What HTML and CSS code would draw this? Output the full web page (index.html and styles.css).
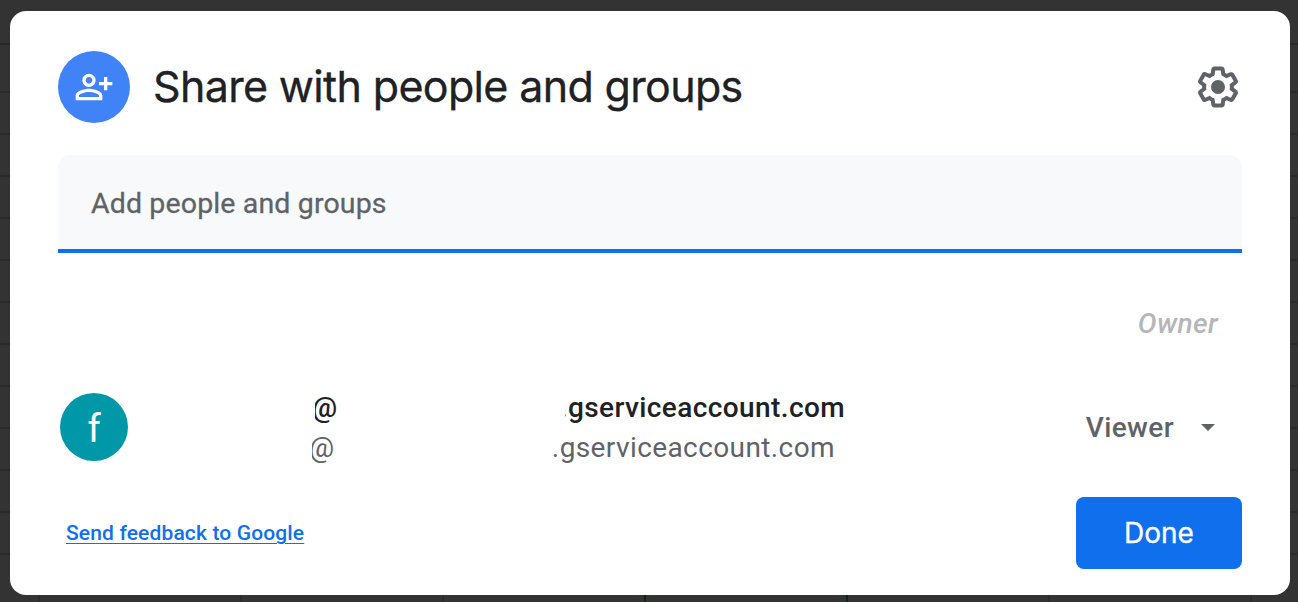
FILE: index.html
```html
<!DOCTYPE html>
<html lang="en">
<head>
  <meta charset="UTF-8" />
  <meta name="viewport" content="width=device-width, initial-scale=1.0"/>
  <title>Share with people and groups</title>
  <link rel="stylesheet" href="styles.css">
</head>
<body>

<div class="dialog">
  <header class="dialog-header">
    <div class="header-icon">
      <svg width="40" height="40" viewBox="0 0 24 24">
        <path d="M9 12c2.21 0 4-1.79 4-4s-1.79-4-4-4-4 1.79-4 4 1.79 4 4 4zm0-6c1.1 0 2 .9 2 2s-.9 2-2 2-2-.9-2-2 .9-2 2-2zM9 13c-2.67 0-8 1.34-8 4v3h16v-3c0-2.66-5.33-4-8-4zm6 5H3v-.99C3.2 16.29 6.3 15 9 15s5.8 1.29 6 2v1zM20 9V6h-2v3h-3v2h3v3h2v-3h3V9z"/>
      </svg>
    </div>
    <h1>Share with people and groups</h1>
    <button class="settings-btn" aria-label="Settings">
      <svg width="48" height="48" viewBox="0 0 24 24">
        <path d="M13.85 22.25h-3.7c-.74 0-1.36-.54-1.45-1.27l-.27-1.89c-.27-.14-.53-.29-.79-.46l-1.8.72c-.7.26-1.47-.03-1.81-.65L2.2 15.53c-.35-.66-.2-1.44.36-1.88l1.53-1.19c-.01-.15-.02-.3-.02-.46 0-.15.01-.31.02-.46l-1.52-1.19c-.59-.45-.74-1.26-.37-1.88l1.85-3.19c.34-.62 1.11-.9 1.79-.63l1.81.73c.26-.17.52-.32.78-.46l.27-1.91c.09-.7.71-1.25 1.44-1.25h3.7c.74 0 1.36.54 1.45 1.27l.27 1.89c.27.14.53.29.79.46l1.8-.72c.71-.26 1.48.03 1.82.65l1.84 3.18c.36.66.2 1.44-.36 1.88l-1.52 1.19c.01.15.02.3.02.46s-.01.31-.02.46l1.52 1.19c.56.45.72 1.23.37 1.86l-1.86 3.22c-.34.62-1.11.9-1.8.63l-1.8-.72c-.26.17-.52.32-.78.46l-.27 1.91c-.1.68-.72 1.22-1.46 1.22zm-3.23-2h2.76l.37-2.55.53-.22c.44-.18.88-.44 1.34-.78l.45-.34 2.38.96 1.38-2.4-2.03-1.58.07-.56c.03-.26.06-.51.06-.78s-.03-.53-.06-.78l-.07-.56 2.03-1.58-1.39-2.4-2.39.96-.45-.35c-.42-.32-.87-.58-1.33-.77l-.52-.22-.37-2.55h-2.76l-.37 2.55-.53.21c-.44.19-.88.44-1.34.79l-.45.33-2.38-.95-1.39 2.39 2.03 1.58-.07.56a7 7 0 0 0-.06.79c0 .26.02.53.06.78l.07.56-2.03 1.58 1.38 2.4 2.39-.96.45.35c.43.33.86.58 1.33.77l.53.22.38 2.55z"/>
        <circle cx="12" cy="12" r="3.5"/>
      </svg>
    </button>
  </header>

  <div class="people-input">Add people and groups</div>

  <div class="owner-row">Owner</div>

  <div class="person-row">
    <div class="avatar">f</div>
    <div class="person-info">
      <div class="person-name"><span class="at">@</span><span class="domain"><span class="dot">.</span>gserviceaccount.com</span></div>
      <div class="person-email"><span class="at">@</span><span class="domain">.gserviceaccount.com</span></div>
    </div>
    <div class="role">
      <span>Viewer</span>
      <span class="arrow"></span>
    </div>
  </div>

  <footer class="dialog-footer">
    <a href="#">Send feedback to Google</a>
    <button class="done-btn">Done</button>
  </footer>
</div>

</body>
</html>
```
FILE: styles.css
```css
* {
  box-sizing: border-box;
}
/* dimmed spreadsheet grid behind the dialog */
body {
  margin: 0;
  height: 602px;
  overflow: hidden;
  padding: 11px 8px 7px 10px;
  font-family: Roboto, sans-serif;
  background-color: #333;
  background-image:
    linear-gradient(#282828, #282828),
    linear-gradient(#0f2419, #0f2419),
    linear-gradient(#0f2419, #0f2419),
    repeating-linear-gradient(to right, transparent 0 38px, #2c2c2c 38px 40px, transparent 40px 202px),
    repeating-linear-gradient(to bottom, transparent 0 40px, #2b2b2b 40px 42px);
  background-size: 100% 2px, 2px 7px, 2px 7px, 100% 7px, 100% 511px;
  background-position: 0 43px, 644px 595px, 846px 595px, 0 595px, 0 51px;
  background-repeat: no-repeat;
}
.dialog {
  height: 584px;
  padding: 40px 48px 26px;
  background: white;
  border-radius: 16px;
}
.dialog-header {
  display: flex;
  align-items: center;
  height: 72px;
}
.header-icon {
  display: flex;
  align-items: center;
  justify-content: center;
  width: 72px;
  height: 72px;
  border-radius: 50%;
  background: #4083f7;
  fill: white;
}
h1 {
  margin: 0 0 2px 23px;
  font-family: Inter, sans-serif;
  font-size: 43px;
  font-weight: 400;
  line-height: 56px;
  letter-spacing: -0.66px;
  -webkit-text-stroke: 0.3px;
  color: #202124;
  white-space: nowrap;
}
.settings-btn {
  width: 48px;
  height: 48px;
  margin-left: auto;
  padding: 0;
  border: none;
  background: none;
  fill: #5f6368;
}
.settings-btn svg {
  display: block;
}
.people-input {
  height: 98px;
  margin-top: 32px;
  padding-left: 33px;
  border-bottom: 4px solid #0f6fec;
  border-radius: 12px 12px 0 0;
  background: #f8f9fb;
  font-size: 28.5px;
  line-height: 97px;
  letter-spacing: 0.14px;
  -webkit-text-stroke: 0.3px;
  color: #5f6368;
}
.owner-row {
  height: 68px;
  margin-top: 37px;
  padding-right: 24px;
  text-align: right;
  font-size: 28px;
  font-weight: 500;
  font-style: italic;
  line-height: 68px;
  letter-spacing: 0.4px;
  color: #b5b6b7;
}
.person-row {
  display: flex;
  align-items: center;
  height: 80px;
  margin-top: 29px;
  padding: 0 27px 0 2px;
}
.avatar {
  width: 68px;
  height: 68px;
  border-radius: 50%;
  background: #0097a9;
  color: white;
  font-size: 38px;
  line-height: 72px;
  text-align: center;
}
.person-info {
  width: 717px;
  padding-top: 2px;
  font-size: 28px;
  line-height: 40px;
  letter-spacing: 0.4px;
}
.person-name,
.person-email {
  display: flex;
  justify-content: space-between;
  height: 40px;
}
.person-name {
  padding-left: 187px;
  font-weight: 500;
  color: #202124;
}
.person-email {
  padding: 0 10px 0 184px;
  color: #5f6368;
}
.at {
  width: 24px;
  overflow: hidden;
  text-indent: -3px;
}
.domain {
  display: flex;
}
.dot {
  display: flex;
  justify-content: flex-end;
  width: 3px;
  overflow: hidden;
}
.role {
  display: flex;
  align-items: center;
  gap: 27px;
  margin-left: auto;
  font-size: 28px;
  font-weight: 500;
  letter-spacing: 0.4px;
  color: #5f6368;
}
.arrow {
  border: 7px solid transparent;
  border-top-color: #5f6368;
  border-bottom: none;
}
.dialog-footer {
  display: flex;
  align-items: center;
  justify-content: space-between;
  height: 72px;
  margin-top: 30px;
  padding-left: 8px;
}
.dialog-footer a {
  color: #0f6fec;
  font-size: 21px;
  font-weight: 500;
  letter-spacing: 0.14px;
  text-decoration-thickness: 1px;
  text-underline-offset: 3px;
}
.done-btn {
  width: 166px;
  height: 72px;
  padding: 0;
  border: none;
  border-radius: 8px;
  background: #0f6fec;
  color: white;
  font-family: Inter, sans-serif;
  font-size: 28px;
  font-weight: 400;
  -webkit-text-stroke: 0.3px;
}
```
